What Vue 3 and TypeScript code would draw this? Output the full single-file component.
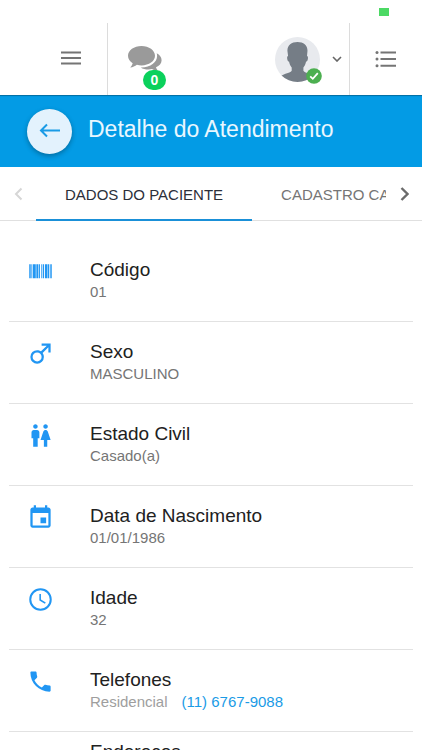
<script setup lang="ts">
import { ref } from 'vue'

interface Field {
  icon: string
  title: string
  value?: string
  label?: string
  phone?: string
  tall?: boolean
}

const tabs: string[] = ['DADOS DO PACIENTE', 'CADASTRO CASA']
const active = ref(0)

const fields: Field[] = [
  { icon: 'barcode', title: 'Código', value: '01' },
  { icon: 'male', title: 'Sexo', value: 'MASCULINO' },
  { icon: 'couple', title: 'Estado Civil', value: 'Casado(a)' },
  { icon: 'event', title: 'Data de Nascimento', value: '01/01/1986' },
  { icon: 'clock', title: 'Idade', value: '32' },
  { icon: 'phone', title: 'Telefones', label: 'Residencial', phone: '(11) 6767-9088' },
  { icon: 'none', title: 'Endereços', tall: true },
]

const paths: Record<string, string> = {
  barcode:
    'M2 5.500h1.300v12.500H2zM3.900 5.500h.8v12.500h-.8zM5.300 5.500h2.500v12.500H5.300zM8.300 5.500h1.800v12.500H8.300zM10.600 5.500h.9v12.500h-.9zM12.700 5.500h.7v12.500h-.7zM14 5.500h1.200v12.500H14zM16 5.500h2v12.500h-2zM18.400 5.500h1.400v12.500h-1.400zM20.700 5.500H22v12.500h-1.300z',
  male: 'M9 9c1.29 0 2.5.41 3.47 1.11L17.58 5H13V3h8v8h-2V6.41l-5.11 5.09c.7 1 1.11 2.2 1.11 3.5a6 6 0 0 1-6 6 6 6 0 0 1-6-6 6 6 0 0 1 6-6m0 2a4 4 0 0 0-4 4 4 4 0 0 0 4 4 4 4 0 0 0 4-4 4 4 0 0 0-4-4z',
  couple:
    'M5.5 22v-7.5H4V9c0-1.1.9-2 2-2h3c1.1 0 2 .9 2 2v5.5H9.5V22h-4zM18 22v-6h3l-2.54-7.63C18.18 7.55 17.42 7 16.56 7h-.12c-.86 0-1.63.55-1.9 1.37L12 16h3v6h3zM7.5 6c1.11 0 2-.89 2-2s-.89-2-2-2-2 .89-2 2 .89 2 2 2zm9 0c1.11 0 2-.89 2-2s-.89-2-2-2-2 .89-2 2 .89 2 2 2z',
  event:
    'M17 12h-5v5h5v-5zM16 1v2H8V1H6v2H5c-1.11 0-1.99.9-1.99 2L3 19c0 1.1.89 2 2 2h14c1.1 0 2-.9 2-2V5c0-1.1-.9-2-2-2h-1V1h-2zm3 18H5V8h14v11z',
  clock:
    'M12 2a10 10 0 1 0 0 20 10 10 0 0 0 0-20zm0 18.2a8.2 8.2 0 1 1 0-16.4 8.2 8.2 0 0 1 0 16.4zM12.4 7H11v5.8l4.9 3 .8-1.2-4.3-2.5z',
  phone:
    'M6.62 10.79c1.44 2.83 3.76 5.14 6.59 6.59l2.2-2.2c.27-.27.67-.36 1.02-.24 1.12.37 2.33.57 3.57.57.55 0 1 .45 1 1V20c0 .55-.45 1-1 1-9.39 0-17-7.61-17-17 0-.55.45-1 1-1h3.5c.55 0 1 .45 1 1 0 1.25.2 2.45.57 3.57.11.35.03.74-.25 1.02l-2.2 2.2z',
}
</script>

<template>
  <div class="page">
    <div class="status"><span class="battery"></span></div>

    <header class="topbar">
      <button class="cell menu" type="button" aria-label="Menu">
        <svg width="22" height="16" viewBox="0 0 22 16"><path d="M1 2.500h20M1 8h20M1 13.500h20" stroke="#757575" stroke-width="2" /></svg>
      </button>
      <button class="chat" type="button" aria-label="Mensagens">
        <svg width="34" height="25" viewBox="0 0 34 25">
          <path d="M13.500 0C6 0 0 4.300 0 9.800c0 3 1.900 5.800 4.700 7.500-.4 1.500-1.200 2.800-2.500 4.200 2.600-.2 4.900-1.300 6.700-2.700 1.500.4 3 .6 4.600.6C21 19.400 27 15.200 27 9.800S21 0 13.500 0z" fill="#9a9a9a" />
          <path d="M28.700 7.300c.3.900.4 1.700.4 2.600 0 6.200-6.600 11.500-15.600 11.500h-.8c2 1.400 4.800 2.100 7.800 2.100 1.200 0 2.400-.1 3.500-.4 1.800 1.100 3.900 1.700 6.200 1.700-1.200-1.100-1.900-2.200-2.200-3.500 3.300-1.500 5.600-4 5.600-7.100 0-2.800-1.900-5.300-4.900-6.900z" fill="#9a9a9a" />
        </svg>
        <span class="badge">0</span>
      </button>
      <button class="user" type="button" aria-label="Conta">
        <span class="avatar">
          <svg width="45" height="45" viewBox="0 0 45 45">
            <defs><clipPath id="disc"><circle cx="22.500" cy="22.500" r="22.500" /></clipPath></defs>
            <circle cx="22.500" cy="22.500" r="22.500" fill="#e8eaee" />
            <path clip-path="url(#disc)" d="M22.500 5c6 0 10 3.200 10 8.700l-.5 5.200c1.200.1 1.100 2.300.7 3.800-.3 1.200-.9 1.900-1.600 1.900-.5 2.600-1.500 4.600-2.700 6v3.200c1.200 2.200 7.400 2.800 10.600 5.200V46H6v-7c3.200-2.400 9.500-3 10.700-5.200v-3.200c-1.200-1.400-2.200-3.400-2.700-6-.7 0-1.300-.7-1.600-1.900-.4-1.500-.5-3.700.7-3.800l-.7-5.200C12.400 8.200 16.500 5 22.500 5z" fill="#757d86" />
          </svg>
          <svg class="check" width="16" height="16" viewBox="0 0 16 16"><circle cx="8" cy="8" r="7.800" fill="#4caf50" /><path d="M4.200 8.400l2.600 2.400 5-5.600" fill="none" stroke="#fff" stroke-width="1.800" /></svg>
        </span>
        <svg width="10" height="6" viewBox="0 0 10 6"><path d="M1 1l4 4 4-4" fill="none" stroke="#666" stroke-width="1.600" /></svg>
      </button>
      <button class="cell more" type="button" aria-label="Lista">
        <svg width="22" height="18" viewBox="0 0 22 18"><path d="M5.500 2.500H21M5.500 9H21M5.500 15.700H21" stroke="#757575" stroke-width="2" /><circle cx="2" cy="2.500" r="1.500" fill="#757575" /><circle cx="2" cy="9" r="1.500" fill="#757575" /><circle cx="2" cy="15.700" r="1.500" fill="#757575" /></svg>
      </button>
    </header>

    <div class="titlebar">
      <button class="back" type="button" aria-label="Voltar">
        <svg width="22" height="16" viewBox="0 0 22 16"><path d="M21 7.500H2.500M8 1.500l-6 6 6 6" fill="none" stroke="#1a9be6" stroke-width="2" /></svg>
      </button>
      <h1>Detalhe do Atendimento</h1>
    </div>

    <nav class="tabs">
      <button class="arrow off" type="button" aria-label="Anterior">
        <svg width="9" height="14" viewBox="0 0 9 14"><path d="M7.500 1.500L2 7l5.500 5.500" fill="none" stroke="currentColor" stroke-width="2" /></svg>
      </button>
      <div class="strip" role="tablist">
        <button v-for="(tab, i) in tabs" :key="tab" class="tab" :class="{ on: i === active }" type="button" role="tab" :aria-selected="i === active" @click="active = i">{{ tab }}</button>
      </div>
      <button class="arrow" type="button" aria-label="Próximo">
        <svg width="9" height="14" viewBox="0 0 9 14"><path d="M1.500 1L7.500 7l-6 6" fill="none" stroke="currentColor" stroke-width="2.400" /></svg>
      </button>
    </nav>

    <ul class="list">
      <li v-for="f in fields" :key="f.title" class="row" :class="{ tall: f.tall }">
        <svg class="icon" width="27" height="27" viewBox="0 0 24 24"><path :d="paths[f.icon]" /></svg>
        <div class="text">
          <h2>{{ f.title }}</h2>
          <p v-if="f.value">{{ f.value }}</p>
          <p v-if="f.phone" class="contact"><span>{{ f.label }}</span><a href="tel:1167679088">{{ f.phone }}</a></p>
        </div>
      </li>
    </ul>
  </div>
</template>

<style>
body {
  background: #fff;
}
</style>

<style scoped>
.page {
  display: flex;
  flex-direction: column;
  height: 100vh;
  overflow: hidden;
  background: #fff;
  font-family: 'Liberation Sans', Arial, sans-serif;
}
button {
  padding: 0;
  border: 0;
  background: none;
  font: inherit;
  color: inherit;
  cursor: pointer;
}
svg {
  display: block;
  flex: none;
}
h1,
h2,
p {
  margin: 0;
  font-weight: 400;
}
.status {
  display: flex;
  flex: none;
  justify-content: flex-end;
  height: 23px;
  padding: 0 33px;
}
.battery {
  width: 10px;
  height: 8px;
  margin-top: 8px;
  background: #4cd964;
}
.topbar {
  display: flex;
  flex: none;
  height: 72px;
}
.cell {
  display: flex;
  align-items: center;
}
.menu {
  justify-content: flex-end;
  width: 108px;
  padding-right: 25px;
  padding-bottom: 2px;
  border-right: 1px solid #dcdcdc;
}
.more {
  justify-content: center;
  width: 73px;
  border-left: 1px solid #dcdcdc;
}
.chat {
  position: relative;
  display: flex;
  align-items: center;
  margin-left: 20px;
  padding-bottom: 2px;
}
.badge {
  position: absolute;
  left: 15px;
  bottom: 5px;
  width: 23px;
  height: 20px;
  border-radius: 10px;
  background: #0bd15c;
  color: #fff;
  font-size: 14px;
  font-weight: 700;
  line-height: 20px;
  text-align: center;
}
.user {
  display: flex;
  align-items: center;
  gap: 12px;
  margin-left: auto;
  padding-right: 7px;
}
.avatar {
  position: relative;
}
.check {
  position: absolute;
  right: -2px;
  bottom: -2px;
}
.titlebar {
  display: flex;
  flex: none;
  align-items: center;
  gap: 16px;
  height: 72px;
  padding: 0 27px;
  background: #039be5;
  box-shadow: inset 0 2px 1px -1px rgba(0, 0, 0, 0.3);
}
.back {
  display: flex;
  flex: none;
  align-items: center;
  justify-content: center;
  width: 45px;
  height: 45px;
  border-radius: 50%;
  background: #e3f2fd;
  box-shadow: 0 2px 5px rgba(0, 0, 0, 0.3);
}
h1 {
  padding-bottom: 4px;
  color: #e9f7ff;
  font-size: 23px;
  line-height: 28px;
  white-space: nowrap;
}
.tabs {
  display: flex;
  flex: none;
  height: 54px;
  box-sizing: border-box;
  box-shadow: inset 0 -1px 0 #e0e0e0;
}
.arrow {
  display: flex;
  flex: none;
  align-items: center;
  justify-content: center;
  width: 36px;
  color: #6b6b6b;
}
.off {
  color: #d6d6d6;
}
.strip {
  display: flex;
  flex: 1;
  min-width: 0;
  overflow: hidden;
}
.tab {
  flex: none;
  padding: 2px 29px 0;
  border-bottom: 2px solid transparent;
  color: #757575;
  font-size: 15px;
  white-space: nowrap;
}
.tab.on {
  border-bottom-color: #1a90d8;
  color: #2b2f3a;
}
.list {
  flex: 1;
  min-height: 0;
  margin: 0;
  padding: 19px 9px 0;
  overflow-y: auto;
  scrollbar-width: none;
  list-style: none;
}
.row {
  display: flex;
  gap: 36px;
  height: 82px;
  box-sizing: border-box;
  padding: 18px 18px 0;
  border-bottom: 1px solid #e2e2e2;
}
.row.tall {
  height: 104px;
  padding-top: 8px;
}
.icon {
  fill: #2196f3;
}
h2 {
  color: #212121;
  font-size: 19px;
  line-height: 24px;
  white-space: nowrap;
}
.text p {
  color: #757575;
  font-size: 15px;
  line-height: 20px;
  white-space: nowrap;
}
.contact {
  display: flex;
  gap: 14px;
}
.text .contact span {
  color: #9e9e9e;
}
.contact a {
  color: #1a9be6;
  text-decoration: none;
}
</style>
